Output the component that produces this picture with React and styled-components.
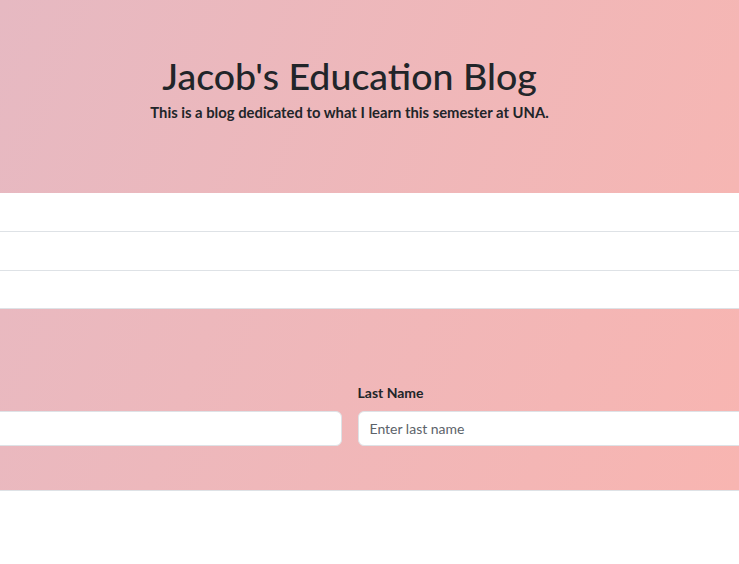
import styled, { createGlobalStyle } from "styled-components";

const GlobalStyle = createGlobalStyle`
  * { box-sizing: border-box; }
  body {
    margin: 0;
    font-family: Lato, "Liberation Sans", sans-serif;
    color: #212529;
    background: #ffffff;
    overflow: hidden;
  }
`;

const Hero = styled.header`
  height: 193px;
  background: linear-gradient(110deg, #e6b9c2 0%, #f6b6b3 100%);
  display: flex;
  flex-direction: column;
  align-items: center;
  padding: 53px 40px 0 0;
`;

const Title = styled.h1`
  margin: 0;
  font-size: 37.5px;
  font-weight: 500;
  line-height: 1.2;
`;

const Lead = styled.p`
  margin: 5px 0 0;
  font-size: 14.8px;
  font-weight: 700;
`;

const List = styled.ul`
  list-style: none;
  margin: 0;
  padding: 0;
`;

const Item = styled.li`
  height: 39px;
  border-bottom: 1px solid #dee2e6;
  &:last-child { height: 38px; }
`;

const FormSection = styled.section`
  height: 182px;
  background: linear-gradient(110deg, #e9b9c0 0%, #f8b5b1 100%);
  border-bottom: 1px solid #dee2e6;
  display: flex;
  justify-content: center;
  padding: 75px 40px 0 0;
  overflow: hidden;
`;

const Row = styled.form`
  flex: 0 0 984px;
  display: grid;
  grid-template-columns: 1fr 1fr;
  column-gap: 16px;
  align-content: start;
`;

const Field = styled.div`
  display: flex;
  flex-direction: column;
`;

const Label = styled.label`
  font-size: 14px;
  font-weight: 700;
  margin-bottom: 10px;
`;

const Input = styled.input`
  height: 35px;
  padding: 0 11px;
  border: 1px solid #dee2e6;
  border-radius: 6px;
  background: #ffffff;
  font-family: Lato, "Liberation Sans", sans-serif;
  font-size: 14px;
  color: #212529;
  &::placeholder { color: #5c636a; }
`;

const App = () => {
  return (
    <>
      <GlobalStyle />
      <Hero>
        <Title>Jacob's Education Blog</Title>
        <Lead>This is a blog dedicated to what I learn this semester at UNA.</Lead>
      </Hero>
      <List>
        <Item />
        <Item />
        <Item />
      </List>
      <FormSection>
        <Row>
          <Field>
            <Label htmlFor="first">First Name</Label>
            <Input id="first" placeholder="Enter first name" />
          </Field>
          <Field>
            <Label htmlFor="last">Last Name</Label>
            <Input id="last" placeholder="Enter last name" />
          </Field>
        </Row>
      </FormSection>
    </>
  );
};

export default App;
